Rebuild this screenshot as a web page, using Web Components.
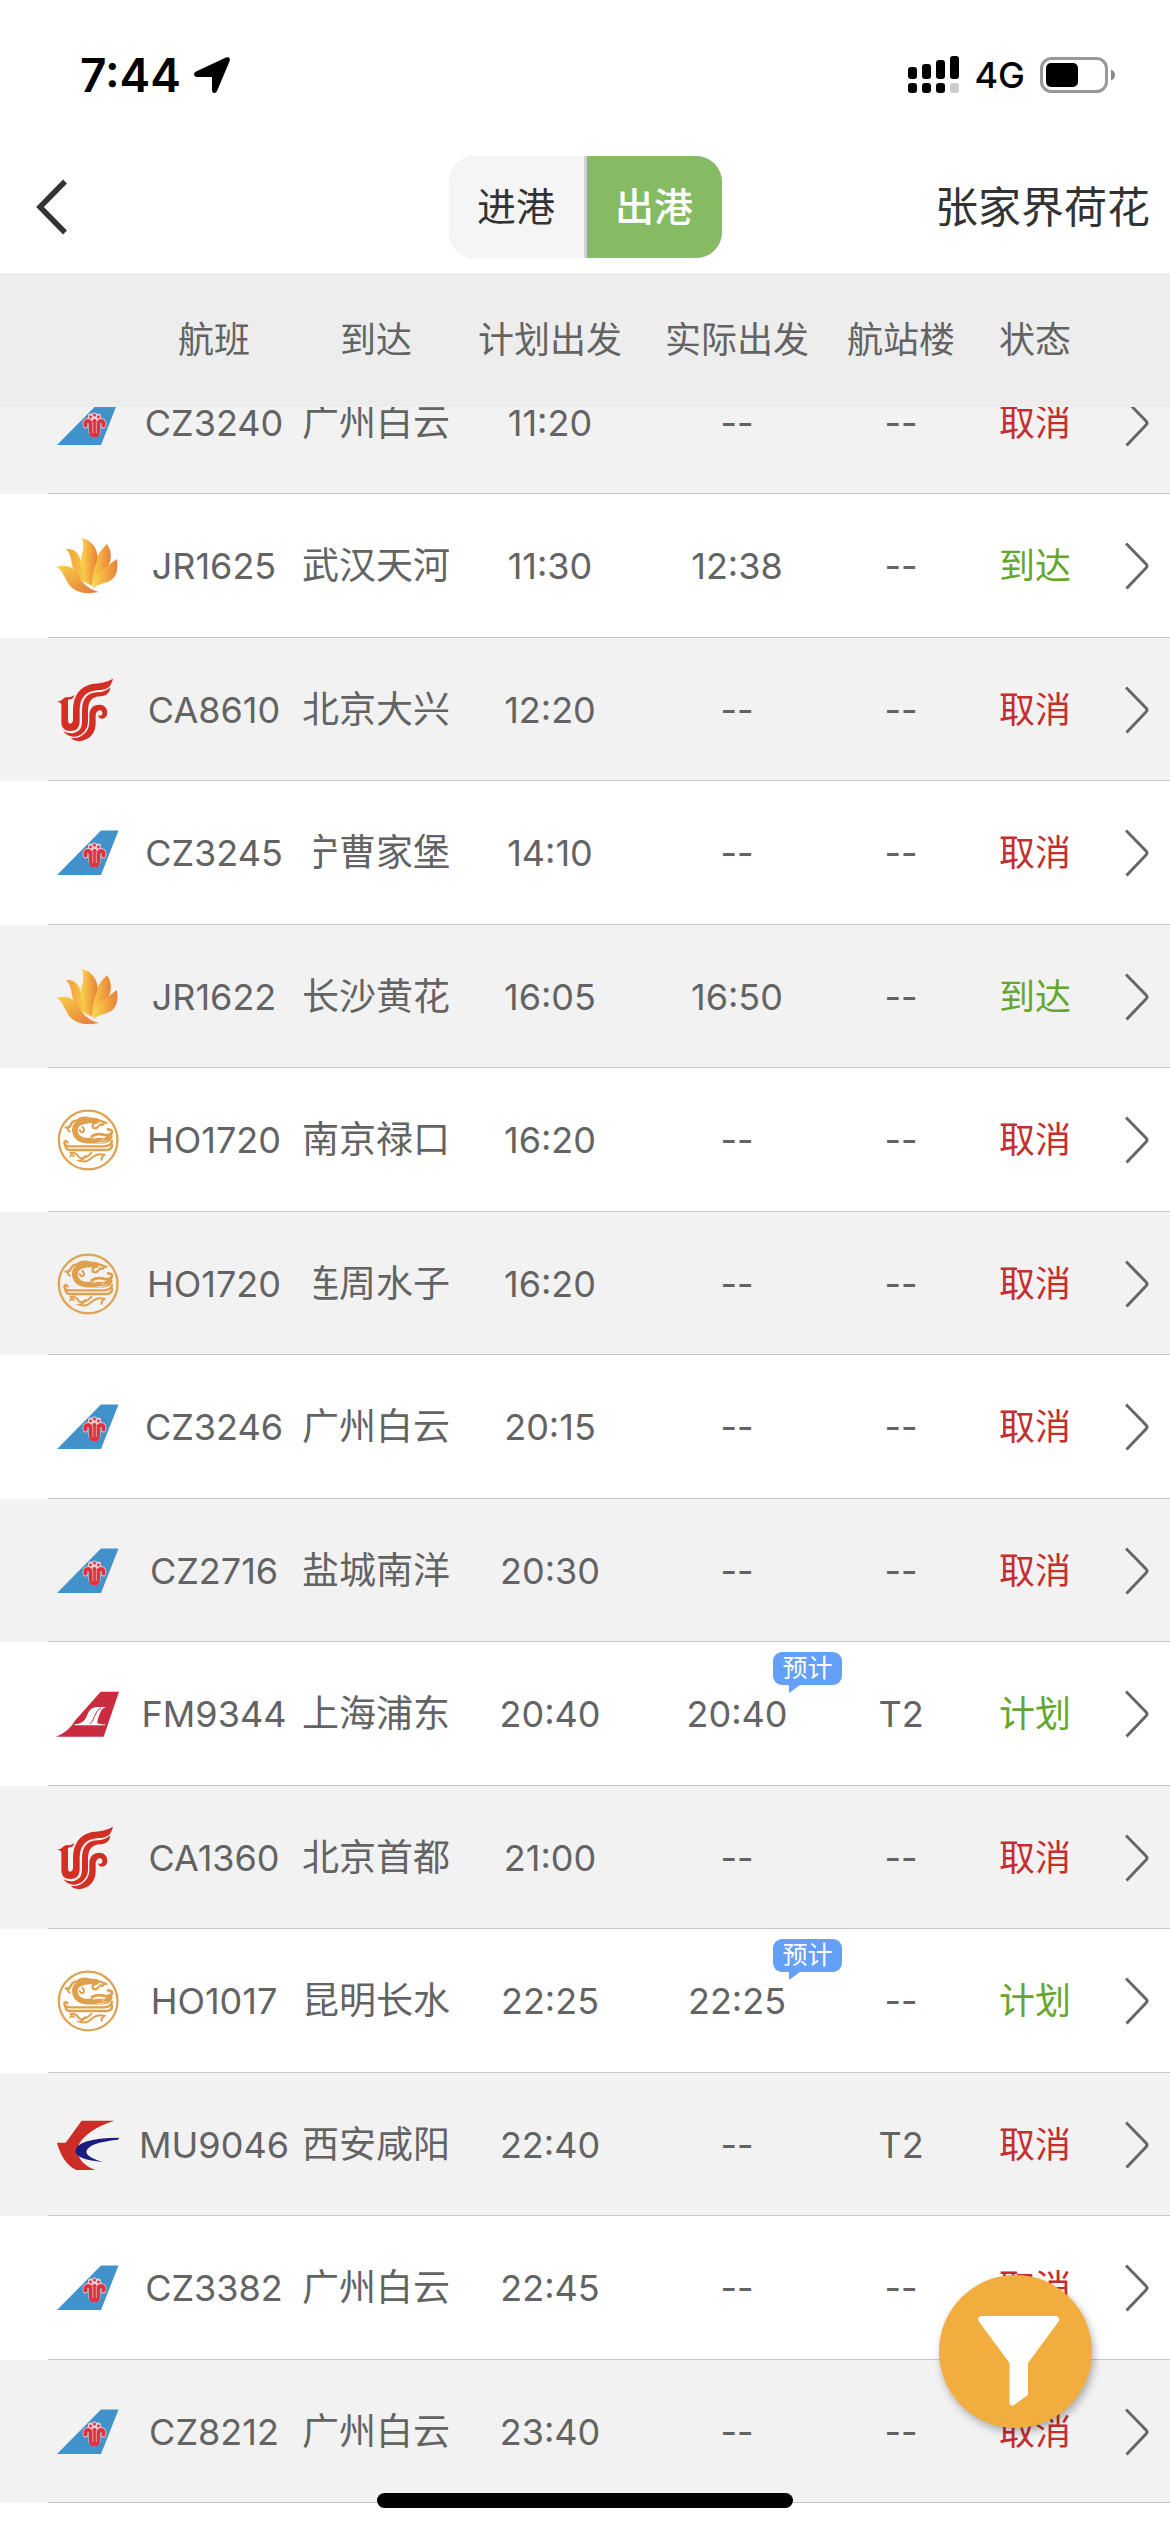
<!DOCTYPE html>
<html lang="zh-CN">
<head>
<meta charset="utf-8">
<meta name="viewport" content="width=device-width, initial-scale=1">
<title>张家界荷花 出港航班</title>
<style>
    html, body {
        height: 100%;
        margin: 0;
        background: #ffffff;
    }
    body {
        font-family: Inter, "Noto Sans CJK SC", sans-serif;
        color: #333333;
    }
</style>
</head>
<body>
<flight-app>
    <status-bar slot="top" time="7:44" network="4G"></status-bar>
    <nav-bar slot="top">
        <segment-control></segment-control>
        <span slot="title">张家界荷花</span>
    </nav-bar>
    <flight-board></flight-board>
    <filter-button slot="overlay"></filter-button>
    <home-indicator slot="overlay"></home-indicator>
</flight-app>

<script>
class FlightApp extends HTMLElement {
    constructor() {
        super();
        this.attachShadow({ mode: 'open' });
        this.shadowRoot.innerHTML = `
            <style>
                :host {
                    display: flex;
                    flex-direction: column;
                    height: 100vh;
                    overflow: hidden;
                    position: relative;
                }
                main {
                    flex: 1;
                    min-height: 0;
                    display: flex;
                    flex-direction: column;
                }
            </style>
            <slot name="top"></slot>
            <main><slot></slot></main>
            <slot name="overlay"></slot>
        `;
    }
}

class StatusBar extends HTMLElement {
    constructor() {
        super();
        this.attachShadow({ mode: 'open' });
        this.shadowRoot.innerHTML = `
            <style>
                :host {
                    display: flex;
                    justify-content: space-between;
                    align-items: center;
                    box-sizing: border-box;
                    height: 141px;
                    padding: 8px 54px 0 80px;
                    color: #000000;
                }
                div {
                    display: flex;
                    align-items: center;
                }
                .left { gap: 12px; }
                .right { gap: 15px; }
                time {
                    font-size: 46px;
                    font-weight: 600;
                }
                span {
                    font-size: 36px;
                    font-weight: 500;
                }
                svg { display: block; }
            </style>
            <div class="left">
                <time>${this.getAttribute('time')}</time>
                <svg width="38" height="38" viewBox="0 0 38 38" aria-hidden="true">
                    <path d="M33 1.500Q37.500 0 36.700 5L24 35Q22.500 38 20 36.500Q19 36 19 34V21H4Q1 20.500 1 18Q1 16.500 3 15.500Z"/>
                </svg>
            </div>
            <div class="right">
                <svg width="51" height="38" viewBox="0 0 51 38" aria-hidden="true">
                    <rect x="0" y="11" width="9" height="12" rx="3"/>
                    <rect x="14" y="8" width="9" height="15" rx="3"/>
                    <rect x="28" y="4" width="9" height="19" rx="3"/>
                    <rect x="42" y="0" width="9" height="23" rx="3"/>
                    <rect x="0" y="27" width="9" height="10" rx="3"/>
                    <rect x="14" y="27" width="9" height="10" rx="3"/>
                    <rect x="28" y="27" width="9" height="10" rx="3"/>
                    <rect x="42" y="27" width="9" height="10" rx="3" fill="#cccccc"/>
                </svg>
                <span>${this.getAttribute('network')}</span>
                <svg width="76" height="36" viewBox="0 0 76 36" aria-hidden="true">
                    <rect x="1.500" y="1.500" width="65" height="33" rx="10" fill="none" stroke="#999999" stroke-width="3"/>
                    <rect x="6" y="6" width="32" height="24" rx="5"/>
                    <path d="M71 12.500Q75 14 75 18T71 23.500Z" fill="#888888"/>
                </svg>
            </div>
        `;
    }
}

class NavBar extends HTMLElement {
    constructor() {
        super();
        this.attachShadow({ mode: 'open' });
        this.shadowRoot.innerHTML = `
            <style>
                :host {
                    display: grid;
                    grid-template-columns: 1fr auto 1fr;
                    align-items: center;
                    height: 132px;
                    padding: 0 20px;
                }
                button {
                    justify-self: start;
                    display: flex;
                    padding: 14px;
                    border: 0;
                    background: none;
                }
                .title {
                    justify-self: end;
                    font-size: 43px;
                    line-height: 60px;
                    white-space: nowrap;
                }
            </style>
            <button type="button" aria-label="返回">
                <svg width="36" height="56" viewBox="0 0 36 56" aria-hidden="true">
                    <path d="M31 2.500L6 28L31 53.500" fill="none" stroke="#333333" stroke-width="5.500"/>
                </svg>
            </button>
            <slot></slot>
            <div class="title"><slot name="title"></slot></div>
        `;
    }
}

class SegmentControl extends HTMLElement {
    constructor() {
        super();
        this.attachShadow({ mode: 'open' });
        this.shadowRoot.innerHTML = `
            <style>
                :host {
                    display: flex;
                    gap: 3px;
                    border-radius: 26px;
                    overflow: hidden;
                    background: #d1d1d6;
                }
                button {
                    width: 135px;
                    height: 102px;
                    padding: 0;
                    border: 0;
                    background: #f5f5f5;
                    color: #333333;
                    font: inherit;
                    font-size: 39px;
                    line-height: 60px;
                }
                button[aria-pressed="true"] {
                    background: #86bb64;
                    color: #ffffff;
                    font-weight: 500;
                }
            </style>
            <button type="button" aria-pressed="false">进港</button>
            <button type="button" aria-pressed="true">出港</button>
        `;
        const buttons = this.shadowRoot.querySelectorAll('button');
        buttons.forEach(button => button.addEventListener('click', () => {
            buttons.forEach(b => b.setAttribute('aria-pressed', String(b === button)));
        }));
    }
}

/* Tail fins and emblems, keyed by IATA airline code */
const LOGOS = {
    CZ: `<svg viewBox="0 0 62 62">
        <path d="M0 53L44 8.500H61.500L44 53Z" fill="#4191cb"/>
        <g fill="none" stroke="#f3c9d4" stroke-width="5" stroke-linecap="round">
            <path d="M28.500 34Q27 29 31 28.500Q34 29 34 33V40Q37.500 46 41 40V33Q41 29 44 28.500Q48 29 46.500 34M37.500 23V42M33.500 24V27M41.500 24V27"/>
        </g>
        <g fill="none" stroke="#d9343f" stroke-width="4" stroke-linecap="round">
            <path d="M28.500 33.500Q27.500 29 31 29Q34 29.500 34 33V40Q34.500 43.500 37.500 43.500T41 40V33Q41 29.500 44 29Q47.500 29 46.500 33.500"/>
            <path d="M37.500 29V42"/>
        </g>
        <path d="M35.800 30V41M39.300 30V41" stroke="#f3c9d4" stroke-width=".7"/>
        <circle cx="37.500" cy="23" r="1.500" fill="#d9343f"/>
        <circle cx="33.500" cy="25" r="1.400" fill="#d9343f"/>
        <circle cx="41.500" cy="25" r="1.400" fill="#d9343f"/>
    </svg>`,
    JR: `<svg viewBox="0 0 62 62">
        <defs>
            <linearGradient id="a" x1="0" x2="1"><stop offset="0" stop-color="#fbd84a"/><stop offset="1" stop-color="#e9803a"/></linearGradient>
            <linearGradient id="b" x1="1" x2="0"><stop offset="0" stop-color="#f9d548"/><stop offset="1" stop-color="#f0a03c"/></linearGradient>
            <linearGradient id="c" x1="0" y1="0" x2="1" y2="1"><stop offset="0" stop-color="#f8cf47"/><stop offset="1" stop-color="#e6763a"/></linearGradient>
        </defs>
        <path d="M50 9C56 18 55 29 47 35Q38 42 35 51C31 35 38 21 50 9Z" fill="url(#a)"/>
        <path d="M60 24C62 39 57 46 47 48Q39 50 36 54C35 40 46 34 60 24Z" fill="url(#a)"/>
        <path d="M9 14Q21 13 24 27C25 37 31 44 35 51C23 46 16 39 15 29Q14 19 9 14Z" fill="url(#b)"/>
        <path d="M25 3C37 6 42 17 40 26Q35 37 35 51C25 43 23 32 24 22Q28 12 25 3Z" fill="url(#a)"/>
        <path d="M-.5 32Q12 28 19 37C25 47 30 54 42 57Q22 61 13 51C7 43 6 35 -.5 32Z" fill="url(#c)"/>
    </svg>`,
    CA: `<svg viewBox="51 55 186 186">
        <g fill="#d42f24">
            <path d="M49 121Q60 123 66 117Q72 110 82 109Q94 111 103 104Q101 115 91 116Q82 115 84 127V178Q84 189 91 189Q98 188 99 178V150C99 105 119 79 155 70Q193 69 219 54C213 81 199 88 176 88C136 91 119 112 119 149V181C119 202 108 211 91 211C73 211 64 201 64 184V130Q60 124 49 121Z"/>
            <path d="M211 80C209 100 196 107 178 107C153 109 144 126 144 151V181C144 210 123 229 99 228Q80 226 70 212Q88 221 104 216C121 211 126 199 126 182V151C126 113 143 96 171 95Q196 95 211 80Z"/>
            <path d="M92 233C116 234 134 224 143 206Q149 194 148 173V164C148 144 160 132 178 132C198 132 206 151 200 165C193 178 175 177 174 163Q180 168 185 163Q190 156 184 150C176 145 167 153 167 166V188C167 218 148 240 115 242Q101 241 92 233Z"/>
        </g>
    </svg>`,
    HO: `<svg viewBox="52 58 186 186">
        <circle cx="145.500" cy="151" r="88" fill="none" stroke="#dea355" stroke-width="7"/>
        <g fill="none" stroke="#dfa04e" stroke-linecap="round">
            <path d="M170 94Q142 88 120 99Q101 108 107 131Q114 151 142 153H188Q207 152 210 141" stroke-width="17"/>
            <path d="M78 113Q89 117 93 106Q98 92 114 92Q122 82 145 85" stroke-width="7"/>
            <path d="M170 90Q186 94 200 100M182 104Q190 108 192 101M166 99Q154 107 161 115Q171 119 177 109" stroke-width="7"/>
            <path d="M120 120Q122 129 130 127Q137 120 128 112M90 126Q80 120 87 111" stroke-width="6"/>
            <path d="M205 119Q219 120 217 129Q211 140 192 135Q170 130 156 140" stroke-width="8"/>
            <path d="M84 158Q78 150 74 158Q75 169 88 170H194Q214 169 217 154" stroke-width="7"/>
            <path d="M76 164Q78 181 90 181H203Q219 178 217 164" stroke-width="7"/>
            <path d="M92 190Q108 186 118 203Q138 210 155 189M102 199Q95 193 92 200M136 199Q132 210 119 213Q140 220 154 206Q174 188 194 196Q184 202 186 210" stroke-width="6"/>
        </g>
        <path d="M160 148Q173 139 190 144Q198 150 184 154M172 158Q190 162 203 153" fill="none" stroke="#fff2df" stroke-width="2"/>
    </svg>`,
    FM: `<svg viewBox="51 69 186 186">
        <path d="M48 230Q84 218 106 181L182 95H237L191 230Z" fill="#cb2b40"/>
        <path d="M102 193Q130 193 141 165Q148 141 174 141H197L193 144Q185 146 180 160Q171 181 172 190Q183 194 195 193V196H105Z" fill="#ffffff"/>
        <path d="M183 143Q169 151 163 170Q157 188 149 192" fill="none" stroke="#cb2b40" stroke-width="3"/>
        <path d="M106 192Q130 192 140 169Q146 151 153 146L143 144L108 184Z" fill="#cb2b40"/>
    </svg>`,
    MU: `<svg viewBox="50 70 186 186">
        <path d="M50 156H76L124 90H222Q152 112 122 151Q98 184 130 218Q143 230 164 238H108Q67 219 50 156Z" fill="#cd2d27"/>
        <path d="M237 141Q105 143 105 182Q108 208 189 214Q140 201 138 183Q142 156 233 147Z" fill="#1b1d7e"/>
    </svg>`
};

class AirlineLogo extends HTMLElement {
    constructor() {
        super();
        this.attachShadow({ mode: 'open' });
    }

    connectedCallback() {
        this.shadowRoot.innerHTML = `
            <style>
                :host {
                    display: block;
                    width: 62px;
                    height: 62px;
                }
                svg {
                    display: block;
                    width: 100%;
                    height: 100%;
                    overflow: visible;
                }
            </style>
            ${LOGOS[this.getAttribute('code')]}
        `;
    }
}

class EstimateBadge extends HTMLElement {
    constructor() {
        super();
        this.attachShadow({ mode: 'open' });
        this.shadowRoot.innerHTML = `
            <style>
                :host {
                    display: block;
                    width: 69px;
                    height: 33px;
                    border-radius: 9px;
                    background: #649ff8;
                    color: #ffffff;
                    font-size: 25px;
                    line-height: 33px;
                    text-align: center;
                }
                :host::after {
                    content: "";
                    position: absolute;
                    left: 16px;
                    top: 100%;
                    border-top: 8px solid #649ff8;
                    border-right: 11px solid transparent;
                }
            </style>
            <slot></slot>
        `;
    }
}

const FLIGHTS = [
    ['CZ3240', '广州白云', '11:20', '--', '--', '取消'],
    ['JR1625', '武汉天河', '11:30', '12:38', '--', '到达'],
    ['CA8610', '北京大兴', '12:20', '--', '--', '取消'],
    ['CZ3245', '西宁曹家堡', '14:10', '--', '--', '取消'],
    ['JR1622', '长沙黄花', '16:05', '16:50', '--', '到达'],
    ['HO1720', '南京禄口', '16:20', '--', '--', '取消'],
    ['HO1720', '大连周水子', '16:20', '--', '--', '取消'],
    ['CZ3246', '广州白云', '20:15', '--', '--', '取消'],
    ['CZ2716', '盐城南洋', '20:30', '--', '--', '取消'],
    ['FM9344', '上海浦东', '20:40', '20:40', 'T2', '计划', true],
    ['CA1360', '北京首都', '21:00', '--', '--', '取消'],
    ['HO1017', '昆明长水', '22:25', '22:25', '--', '计划', true],
    ['MU9046', '西安咸阳', '22:40', '--', 'T2', '取消'],
    ['CZ3382', '广州白云', '22:45', '--', '--', '取消'],
    ['CZ8212', '广州白云', '23:40', '--', '--', '取消']
];

class FlightBoard extends HTMLElement {
    constructor() {
        super();
        this.attachShadow({ mode: 'open' });
        this.shadowRoot.innerHTML = `
            <style>
                :host {
                    display: block;
                    flex: 1;
                    min-height: 0;
                    overflow-y: auto;
                    scrollbar-width: none;
                    color: #636363;
                }
                table {
                    width: 100%;
                    table-layout: fixed;
                    border-collapse: separate;
                    border-spacing: 0;
                    margin-bottom: 102px;
                    font-size: 36px;
                    line-height: 48px;
                    text-align: center;
                }
                th, td {
                    padding: 0;
                    white-space: nowrap;
                    font-weight: 400;
                }
                thead th {
                    position: sticky;
                    top: 0;
                    z-index: 2;
                    height: 134px;
                    background: #ededed;
                }
                tbody tr {
                    height: 143px;
                    background: linear-gradient(#c8c8ca, #c8c8ca) right bottom / calc(100% - 48px) 1px no-repeat #f2f2f2;
                }
                tbody tr:nth-child(even) {
                    height: 144px;
                    background-color: #ffffff;
                }
                airline-logo { margin-left: 57px; }
                .city { font-size: 37px; }
                .long {
                    display: flex;
                    justify-content: flex-end;
                    width: 136px;
                    margin-left: 14px;
                    overflow: hidden;
                }
                .actual { position: relative; }
                estimate-badge {
                    position: absolute;
                    left: calc(50% + 36px);
                    top: 10px;
                }
                .green { color: #65a62c; }
                .red { color: #c52e2f; }
                a {
                    display: flex;
                    justify-content: center;
                    padding-left: 10px;
                }
            </style>
            <table>
                <colgroup>
                    <col style="width: 128px"><col style="width: 172px">
                    <col style="width: 152px"><col style="width: 196px">
                    <col style="width: 178px"><col style="width: 150px">
                    <col style="width: 118px"><col style="width: 76px">
                </colgroup>
                <thead>
                    <tr>
                        <th></th><th>航班</th><th>到达</th><th>计划出发</th>
                        <th>实际出发</th><th>航站楼</th><th>状态</th><th></th>
                    </tr>
                </thead>
                <tbody>${FLIGHTS.map(flight => this.row(flight)).join('')}</tbody>
            </table>
        `;
    }

    row([number, city, planned, actual, terminal, status, estimated]) {
        return `
            <tr>
                <td><airline-logo code="${number.slice(0, 2)}"></airline-logo></td>
                <td>${number}</td>
                <td class="city">${city.length > 4 ? `<div class="long"><span>${city.slice(-4)}</span></div>` : city}</td>
                <td>${planned}</td>
                <td class="actual">${actual}${estimated ? '<estimate-badge>预计</estimate-badge>' : ''}</td>
                <td>${terminal}</td>
                <td class="${status === '取消' ? 'red' : 'green'}">${status}</td>
                <td>
                    <a href="#${number}" aria-label="${number} 详情">
                        <svg width="24" height="48" viewBox="0 0 24 48" aria-hidden="true">
                            <path d="M1 1.500L21 22Q23 24 21 26L1.500 46.500" fill="none" stroke="#666666" stroke-width="3"/>
                        </svg>
                    </a>
                </td>
            </tr>
        `;
    }

    connectedCallback() {
        // the first flight is partly scrolled under the header
        this.scrollTop = 56;
    }
}

class FilterButton extends HTMLElement {
    constructor() {
        super();
        this.attachShadow({ mode: 'open' });
        this.shadowRoot.innerHTML = `
            <style>
                :host {
                    position: absolute;
                    right: 78px;
                    bottom: 104px;
                    z-index: 3;
                }
                button {
                    display: block;
                    width: 153px;
                    height: 153px;
                    padding: 0;
                    border: 0;
                    border-radius: 50%;
                    background: #f1ad3d;
                    box-shadow: 2px 4px 8px rgba(0, 0, 0, 0.3);
                }
                svg { display: block; }
            </style>
            <button type="button" aria-label="筛选">
                <svg width="153" height="153" viewBox="0 0 153 153" aria-hidden="true">
                    <path d="M42 41H117Q121 42 120 46L89 88V120L75 130Q71 132 70.500 128V88L39.500 46Q38 42 42 41Z" fill="#ffffff"/>
                </svg>
            </button>
        `;
    }
}

class HomeIndicator extends HTMLElement {
    constructor() {
        super();
        this.attachShadow({ mode: 'open' });
        this.shadowRoot.innerHTML = `
            <style>
                :host {
                    position: absolute;
                    left: 0;
                    right: 0;
                    bottom: 24px;
                    z-index: 3;
                    display: flex;
                    justify-content: center;
                    pointer-events: none;
                }
                div {
                    width: 416px;
                    height: 15px;
                    border-radius: 8px;
                    background: #000000;
                }
            </style>
            <div></div>
        `;
    }
}

customElements.define('airline-logo', AirlineLogo);
customElements.define('estimate-badge', EstimateBadge);
customElements.define('flight-app', FlightApp);
customElements.define('status-bar', StatusBar);
customElements.define('nav-bar', NavBar);
customElements.define('segment-control', SegmentControl);
customElements.define('flight-board', FlightBoard);
customElements.define('filter-button', FilterButton);
customElements.define('home-indicator', HomeIndicator);
</script>
</body>
</html>
